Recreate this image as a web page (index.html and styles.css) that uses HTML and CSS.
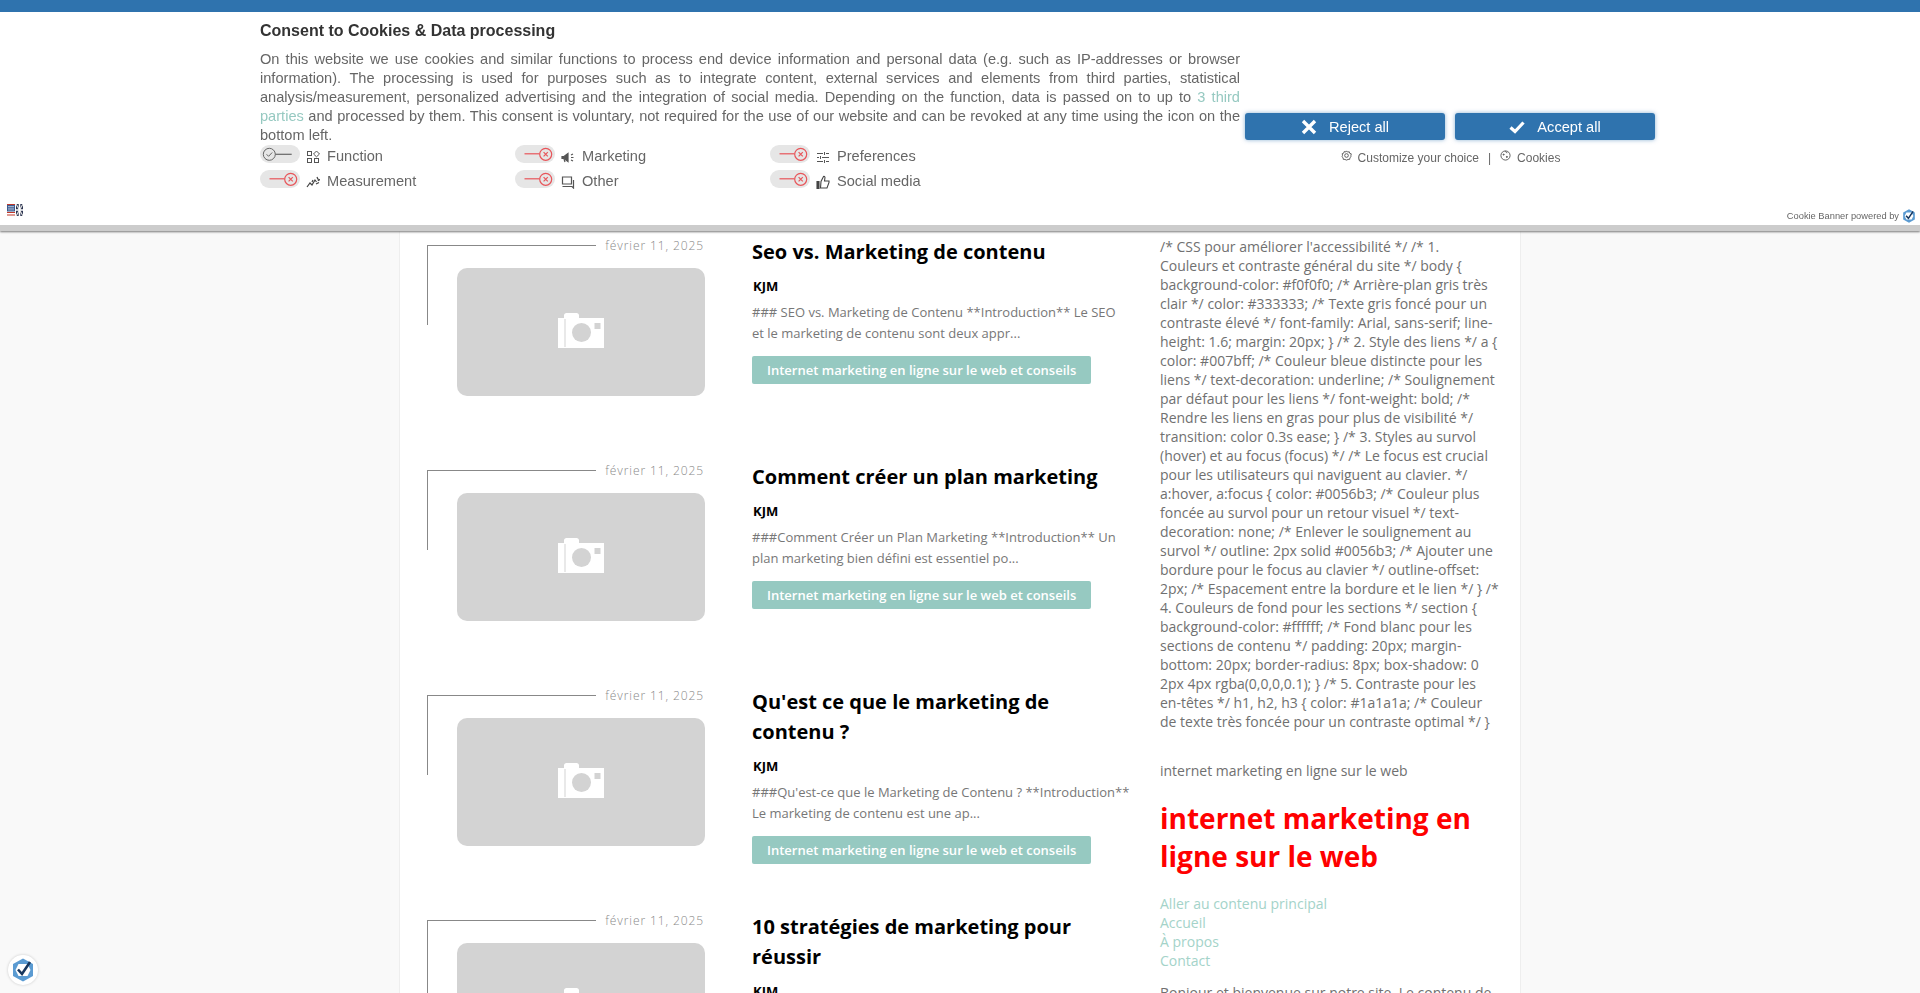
FILE: index.html
```html
<!DOCTYPE html>
<html lang="fr">
<head>
<meta charset="utf-8">
<title>internet marketing en ligne sur le web</title>
<link rel="stylesheet" href="styles.css">
</head>
<body>
<svg class="defs" width="0" height="0" aria-hidden="true">
  <defs>
    <symbol id="camera" viewBox="0 0 46 35">
      <path fill="#fff" d="M0 5h6V2.500C6 1 7 0 8.500 0h10C20 0 21 1 21 2.500V5h25v30H0z"/>
      <rect x="6.500" y="6" width="1" height="28" fill="#d3d3d3"/>
      <circle cx="23.500" cy="19.500" r="9.500" fill="#d3d3d3"/>
      <rect x="36.500" y="10" width="6" height="6" fill="#d3d3d3"/>
    </symbol>
    <symbol id="toggle-off" viewBox="0 0 40 19">
      <path d="M9.500 8.800h15" stroke="#e8555a" stroke-width="1.200" fill="none"/>
      <circle cx="30.700" cy="9.300" r="6" fill="none" stroke="#e8555a" stroke-width="1.200"/>
      <path d="M28.600 7.200l4.200 4.200m0-4.200l-4.200 4.200" stroke="#e8555a" stroke-width="1.200" fill="none"/>
    </symbol>
    <symbol id="toggle-on" viewBox="0 0 40 19">
      <circle cx="9.300" cy="9.300" r="6" fill="none" stroke="#666" stroke-width="1"/>
      <path d="M6.600 9.300l2 2 3.600-3.800" stroke="#666" stroke-width="1" fill="none"/>
      <path d="M15.300 9.300h16.400" stroke="#666" stroke-width="1.200" fill="none"/>
    </symbol>
    <symbol id="logo" viewBox="0 0 24 24">
      <path fill="#5b9bd2" d="M12 .5l10 5.500v12l-10 5.500L2 18V6z"/>
      <path fill="#fff" d="M7.500 6h9l3 6-3 6h-9l-3-6z"/>
      <path fill="none" stroke="#17365d" stroke-width="2.600" d="M7 11.500l4 4.500 8-12"/>
    </symbol>
  </defs>
</svg>

<section class="banner">
  <div class="banner-body">
    <div class="banner-text">
      <h2 class="banner-title">Consent to Cookies &amp; Data processing</h2>
      <p class="banner-copy">On this website we use cookies and similar functions to process end device information and personal data (e.g. such as IP-addresses or browser information). The processing is used for purposes such as to integrate content, external services and elements from third parties, statistical analysis/measurement, personalized advertising and the integration of social media. Depending on the function, data is passed on to up to <a class="banner-link" href="#">3 third parties</a> and processed by them. This consent is voluntary, not required for the use of our website and can be revoked at any time using the icon on the bottom left.</p>
      <ul class="purposes">
        <li class="purpose">
          <span class="switch"><svg class="switch-glyph"><use href="#toggle-on"/></svg></span>
          <svg class="purpose-icon" viewBox="0 0 14 14" fill="none" stroke="#555" stroke-width="1"><rect x="1.500" y="1.500" width="4" height="4"/><path d="M10.500 1l3 3-3 2.800-3-2.800z"/><rect x="1.500" y="8.500" width="4" height="4"/><rect x="8.500" y="8.500" width="4" height="4"/></svg>
          <span class="purpose-label">Function</span>
        </li>
        <li class="purpose">
          <span class="switch"><svg class="switch-glyph"><use href="#toggle-off"/></svg></span>
          <svg class="purpose-icon" viewBox="0 0 14 14" fill="none" stroke="#555" stroke-width="1.200"><path d="M1 6.500h2l4-3v8l-4-3H1z" fill="#555"/><path d="M3 9l1 3M10 5l2-1M10 7.500h2.500M10 10l2 1"/></svg>
          <span class="purpose-label">Marketing</span>
        </li>
        <li class="purpose">
          <span class="switch"><svg class="switch-glyph"><use href="#toggle-off"/></svg></span>
          <svg class="purpose-icon" viewBox="0 0 14 14" fill="none" stroke="#555" stroke-width="1"><path d="M1 3.500h6M10 3.500h3M1 7.500h2M6 7.500h7M1 11.500h6M10 11.500h3M8.500 2v3M4.500 6v3M8.500 10v3"/></svg>
          <span class="purpose-label">Preferences</span>
        </li>
        <li class="purpose">
          <span class="switch"><svg class="switch-glyph"><use href="#toggle-off"/></svg></span>
          <svg class="purpose-icon" viewBox="0 0 14 14" fill="none" stroke="#444" stroke-width="1.200"><path d="M1 12l3-4 2 2 3-5 1.500 2"/><path d="M6 7l1-2M10 9l3-1.500M11 2l.8 2 2 .8-2 .8"/></svg>
          <span class="purpose-label">Measurement</span>
        </li>
        <li class="purpose">
          <span class="switch"><svg class="switch-glyph"><use href="#toggle-off"/></svg></span>
          <svg class="purpose-icon" viewBox="0 0 14 14" fill="none" stroke="#555" stroke-width="1.200"><path d="M1.500 2h9v7h-9z"/><path d="M1.500 11.500h9.500l1.500 1.500V5"/></svg>
          <span class="purpose-label">Other</span>
        </li>
        <li class="purpose">
          <span class="switch"><svg class="switch-glyph"><use href="#toggle-off"/></svg></span>
          <svg class="purpose-icon" viewBox="0 0 14 14" fill="none" stroke="#444" stroke-width="1.100"><path d="M1 6.500h2v7H1z" fill="#444"/><path d="M4.500 13h6.500l2-5.500V6H8.500l.5-3.500C9 1.500 8 1 7.500 1.500L5 6.500z"/></svg>
          <span class="purpose-label">Social media</span>
        </li>
      </ul>
    </div>
    <div class="banner-actions">
      <div class="button-row">
        <button class="consent-btn" type="button"><svg class="btn-icon" viewBox="0 0 16 16"><path fill="none" stroke="#fff" stroke-width="3.400" d="M2 2l12 12M14 2L2 14"/></svg>Reject all</button>
        <button class="consent-btn" type="button"><svg class="btn-icon" viewBox="0 0 16 16"><path fill="none" stroke="#fff" stroke-width="3.200" d="M1.500 8.500l4.500 4 8.500-9"/></svg>Accept all</button>
      </div>
      <div class="choice-row">
        <svg class="choice-icon" viewBox="0 0 12 12" fill="none" stroke="#555" stroke-width="1"><circle cx="6" cy="6" r="2"/><path d="M6 1l1.200 1.300 1.800-.4.500 1.700 1.700.6-.4 1.800L11 7.200l-1.300 1.200-.2 1.800-1.800.1L6 11l-1.700-.7-1.800-.1-.2-1.800L1 7.200 1.700 5.800 1.300 4l1.700-.6.500-1.700 1.800.4z"/></svg>
        <span class="choice-label">Customize your choice</span>
        <span class="choice-sep">|</span>
        <svg class="choice-icon" viewBox="0 0 12 12" fill="none" stroke="#555" stroke-width="1"><circle cx="6" cy="6" r="5"/><circle cx="4" cy="5" r=".6" fill="#555"/><circle cx="7.500" cy="7.500" r=".6" fill="#555"/><path d="M6 1c0 1.500 1 2 2 2"/></svg>
        <span class="choice-label">Cookies</span>
      </div>
    </div>
  </div>
  <svg class="lang-flags" viewBox="0 0 16 12" aria-hidden="true">
    <rect width="8" height="12" fill="#fff"/>
    <path d="M0 0h8v1H0zM0 8h8v1H0zM0 10.500h8v1H0z" fill="#c0392b"/>
    <rect y="1" width="8" height="6.500" fill="#3b5a8f"/>
    <path d="M1 2.500h6M1 4.200h6M1 5.900h6" stroke="#cfd8ea" stroke-width=".7"/>
    <rect x="9" width="7" height="12" fill="#2a3350"/>
    <path d="M9 0l7 12M16 0L9 12" stroke="#ddd" stroke-width="1.200"/>
    <path d="M12.500 0v12M9 6h7" stroke="#fff" stroke-width="1.600"/>
  </svg>
  <div class="powered"><span>Cookie Banner powered by</span><svg class="powered-logo"><use href="#logo"/></svg></div>
</section>

<main class="page">
  <div class="posts">
    <article class="post">
      <div class="media">
        <div class="date-row"><span class="rule"></span><time class="date">février 11, 2025</time></div>
        <div class="thumb"><svg class="camera"><use href="#camera"/></svg></div>
      </div>
      <div class="summary">
        <h2 class="post-title">Seo vs. Marketing de contenu</h2>
        <div class="author">KJM</div>
        <p class="excerpt">### SEO vs. Marketing de Contenu **Introduction** Le SEO et le marketing de contenu sont deux appr...</p>
        <a class="category" href="#">Internet marketing en ligne sur le web et conseils</a>
      </div>
    </article>
    <article class="post">
      <div class="media">
        <div class="date-row"><span class="rule"></span><time class="date">février 11, 2025</time></div>
        <div class="thumb"><svg class="camera"><use href="#camera"/></svg></div>
      </div>
      <div class="summary">
        <h2 class="post-title">Comment créer un plan marketing</h2>
        <div class="author">KJM</div>
        <p class="excerpt">###Comment Créer un Plan Marketing **Introduction** Un plan marketing bien défini est essentiel po...</p>
        <a class="category" href="#">Internet marketing en ligne sur le web et conseils</a>
      </div>
    </article>
    <article class="post">
      <div class="media">
        <div class="date-row"><span class="rule"></span><time class="date">février 11, 2025</time></div>
        <div class="thumb"><svg class="camera"><use href="#camera"/></svg></div>
      </div>
      <div class="summary">
        <h2 class="post-title">Qu'est ce que le marketing de contenu ?</h2>
        <div class="author">KJM</div>
        <p class="excerpt">###Qu'est-ce que le Marketing de Contenu ? **Introduction** Le marketing de contenu est une ap...</p>
        <a class="category" href="#">Internet marketing en ligne sur le web et conseils</a>
      </div>
    </article>
    <article class="post">
      <div class="media">
        <div class="date-row"><span class="rule"></span><time class="date">février 11, 2025</time></div>
        <div class="thumb"><svg class="camera"><use href="#camera"/></svg></div>
      </div>
      <div class="summary">
        <h2 class="post-title">10 stratégies de marketing pour réussir</h2>
        <div class="author">KJM</div>
      </div>
    </article>
  </div>
  <aside class="sidebar">
    <p class="side-code">/* CSS pour améliorer l'accessibilité */ /* 1. Couleurs et contraste général du site */ body { background-color: #f0f0f0; /* Arrière-plan gris très clair */ color: #333333; /* Texte gris foncé pour un contraste élevé */ font-family: Arial, sans-serif; line-height: 1.6; margin: 20px; } /* 2. Style des liens */ a { color: #007bff; /* Couleur bleue distincte pour les liens */ text-decoration: underline; /* Soulignement par défaut pour les liens */ font-weight: bold; /* Rendre les liens en gras pour plus de visibilité */ transition: color 0.3s ease; } /* 3. Styles au survol (hover) et au focus (focus) */ /* Le focus est crucial pour les utilisateurs qui naviguent au clavier. */ a:hover, a:focus { color: #0056b3; /* Couleur plus foncée au survol pour un retour visuel */ text-decoration: none; /* Enlever le soulignement au survol */ outline: 2px solid #0056b3; /* Ajouter une bordure pour le focus au clavier */ outline-offset: 2px; /* Espacement entre la bordure et le lien */ } /* 4. Couleurs de fond pour les sections */ section { background-color: #ffffff; /* Fond blanc pour les sections de contenu */ padding: 20px; margin-bottom: 20px; border-radius: 8px; box-shadow: 0 2px 4px rgba(0,0,0,0.1); } /* 5. Contraste pour les en-têtes */ h1, h2, h3 { color: #1a1a1a; /* Couleur de texte très foncée pour un contraste optimal */ }</p>
    <p class="side-tag">internet marketing en ligne sur le web</p>
    <h1 class="side-heading">internet marketing en ligne sur le web</h1>
    <nav class="side-nav">
      <a href="#">Aller au contenu principal</a>
      <a href="#">Accueil</a>
      <a href="#">À propos</a>
      <a href="#">Contact</a>
    </nav>
    <p class="side-intro">Bonjour et bienvenue sur notre site. Le contenu de</p>
  </aside>
</main>

<button class="consent-fab" type="button" aria-label="Cookie settings"><svg class="fab-logo"><use href="#logo"/></svg></button>
</body>
</html>
```
FILE: styles.css
```css
* { box-sizing: border-box; }
html, body { height: 100%; }
body {
  margin: 0;
  height: 993px;
  overflow: hidden;
  background: #f9f9f9;
  font-family: "Open Sans", "Liberation Sans", sans-serif;
  color: #707070;
}
.defs { position: absolute; }

/* Consent banner */
.banner {
  position: fixed;
  top: 0;
  left: 0;
  right: 0;
  z-index: 5;
  height: 231px;
  background: #fff;
  border-top: 12px solid #2f73ae;
  border-bottom: 6px solid #ccc;
  box-shadow: 0 1px 2px #777;
  font-family: "Liberation Sans", Arial, sans-serif;
  color: #666;
}
.banner-body { display: flex; padding-left: 260px; }
.banner-text { width: 980px; }
.banner-title {
  margin: 9px 0 0;
  font-size: 16px;
  line-height: 19px;
  font-weight: 700;
  color: #333;
}
.banner-copy {
  margin: 10px 0 0;
  font-size: 14.600px;
  line-height: 19px;
  text-align: justify;
}
.banner-link { color: #96c9c1; text-decoration: none; }
.purposes {
  display: grid;
  grid-template-columns: repeat(3, 255px);
  row-gap: 7px;
  margin: 0;
  padding: 0;
  list-style: none;
}
.purpose {
  display: flex;
  align-items: center;
  height: 18px;
  font-size: 14.600px;
}
.purpose-label { padding-top: 4px; }
.switch {
  display: block;
  width: 40px;
  height: 18px;
  border-radius: 9px;
  background: #e6e6e6;
}
.switch-glyph { display: block; width: 40px; height: 19px; }
.purpose-icon { width: 14px; height: 14px; margin: 5px 7px 0 6px; }
.banner-actions { width: 410px; margin-left: 5px; padding-top: 101px; }
.button-row { display: flex; gap: 10px; }
.consent-btn {
  display: flex;
  align-items: center;
  justify-content: center;
  width: 200px;
  height: 27px;
  padding: 0;
  border: 0;
  border-radius: 3px;
  background: #2f73ae;
  box-shadow: 0 0 4px rgba(47, 115, 174, .55);
  color: #fff;
  font: 14.600px "Liberation Sans", Arial, sans-serif;
}
.btn-icon { width: 16px; height: 16px; margin-right: 12px; }
.choice-row {
  display: flex;
  align-items: center;
  justify-content: center;
  height: 17px;
  margin-top: 9px;
  padding-left: 1px;
  font-size: 12px;
}
.choice-icon { width: 11px; height: 11px; margin: -4px 6px 0 0; }
.choice-sep { margin: 0 9px; }
.lang-flags { position: absolute; left: 7px; top: 192px; width: 16px; height: 12px; }
.powered {
  position: absolute;
  right: 4px;
  top: 197px;
  display: flex;
  align-items: center;
  font-size: 9.300px;
  line-height: 14px;
}
.powered-logo { width: 14px; height: 14px; margin-left: 3px; }

/* Page */
.page {
  display: flex;
  width: 1122px;
  height: 993px;
  margin: 0 auto;
  padding: 236px 0 0 27px;
  background: #fff;
  border: solid #eee;
  border-width: 0 1px;
  overflow: hidden;
}
.posts { width: 705px; flex: none; }
.post { display: flex; height: 225px; }
.media { position: relative; width: 277px; flex: none; }
.media::before {
  content: "";
  position: absolute;
  left: 0;
  top: 9px;
  height: 80px;
  border-left: 1px solid #888;
}
.date-row { display: flex; align-items: center; gap: 9px; height: 20px; }
.rule { flex: 1; margin-top: -2px; border-top: 1px solid #888; }
.date {
  font-size: 12px;
  font-weight: 300;
  letter-spacing: .9px;
  line-height: 20px;
  color: #888;
}
.thumb {
  display: flex;
  align-items: center;
  justify-content: center;
  width: 248px;
  height: 128px;
  margin: 12px 0 0 30px;
  border-radius: 10px;
  background: #d3d3d3;
}
.camera { display: block; width: 46px; height: 35px; margin-bottom: 4px; }
.summary { width: 378px; margin-left: 48px; }
.post-title {
  margin: 1px 0 0;
  font-size: 20px;
  font-weight: 700;
  line-height: 30px;
  color: #000;
}
.author {
  margin: 9px 0 0 1px;
  font-size: 13px;
  font-weight: 700;
  line-height: 20px;
  color: #000;
}
.excerpt {
  margin: 6px 0 12px;
  font-size: 13px;
  line-height: 21px;
  color: #777;
}
.category {
  display: inline-block;
  height: 28px;
  padding: 0 15px;
  border-radius: 2px;
  background: #96c9c1;
  color: #fff;
  font-size: 13px;
  font-weight: 600;
  line-height: 28px;
  text-decoration: none;
  white-space: nowrap;
}

/* Sidebar */
.sidebar { width: 340px; margin-left: 28px; font-size: 14px; line-height: 19px; }
.sidebar p { margin: 0; }
.sidebar .side-code { margin-top: 1px; }
.sidebar .side-tag { margin-top: 30px; }
.side-heading {
  margin: 20px 0 19px;
  font-size: 28px;
  font-weight: 700;
  line-height: 37.700px;
  color: #f00;
}
.side-nav { display: flex; flex-direction: column; }
.side-nav a { color: #a4d3c9; text-decoration: none; }
.sidebar .side-intro { margin-top: 13px; white-space: nowrap; }

/* Floating consent icon */
.consent-fab {
  position: fixed;
  left: 8px;
  top: 955px;
  z-index: 6;
  display: flex;
  align-items: center;
  justify-content: center;
  width: 30px;
  height: 30px;
  padding: 0;
  border: 0;
  border-radius: 50%;
  background: #fff;
  box-shadow: 0 0 3px rgba(0, 0, 0, .2);
}
.fab-logo { width: 24px; height: 24px; }
```
